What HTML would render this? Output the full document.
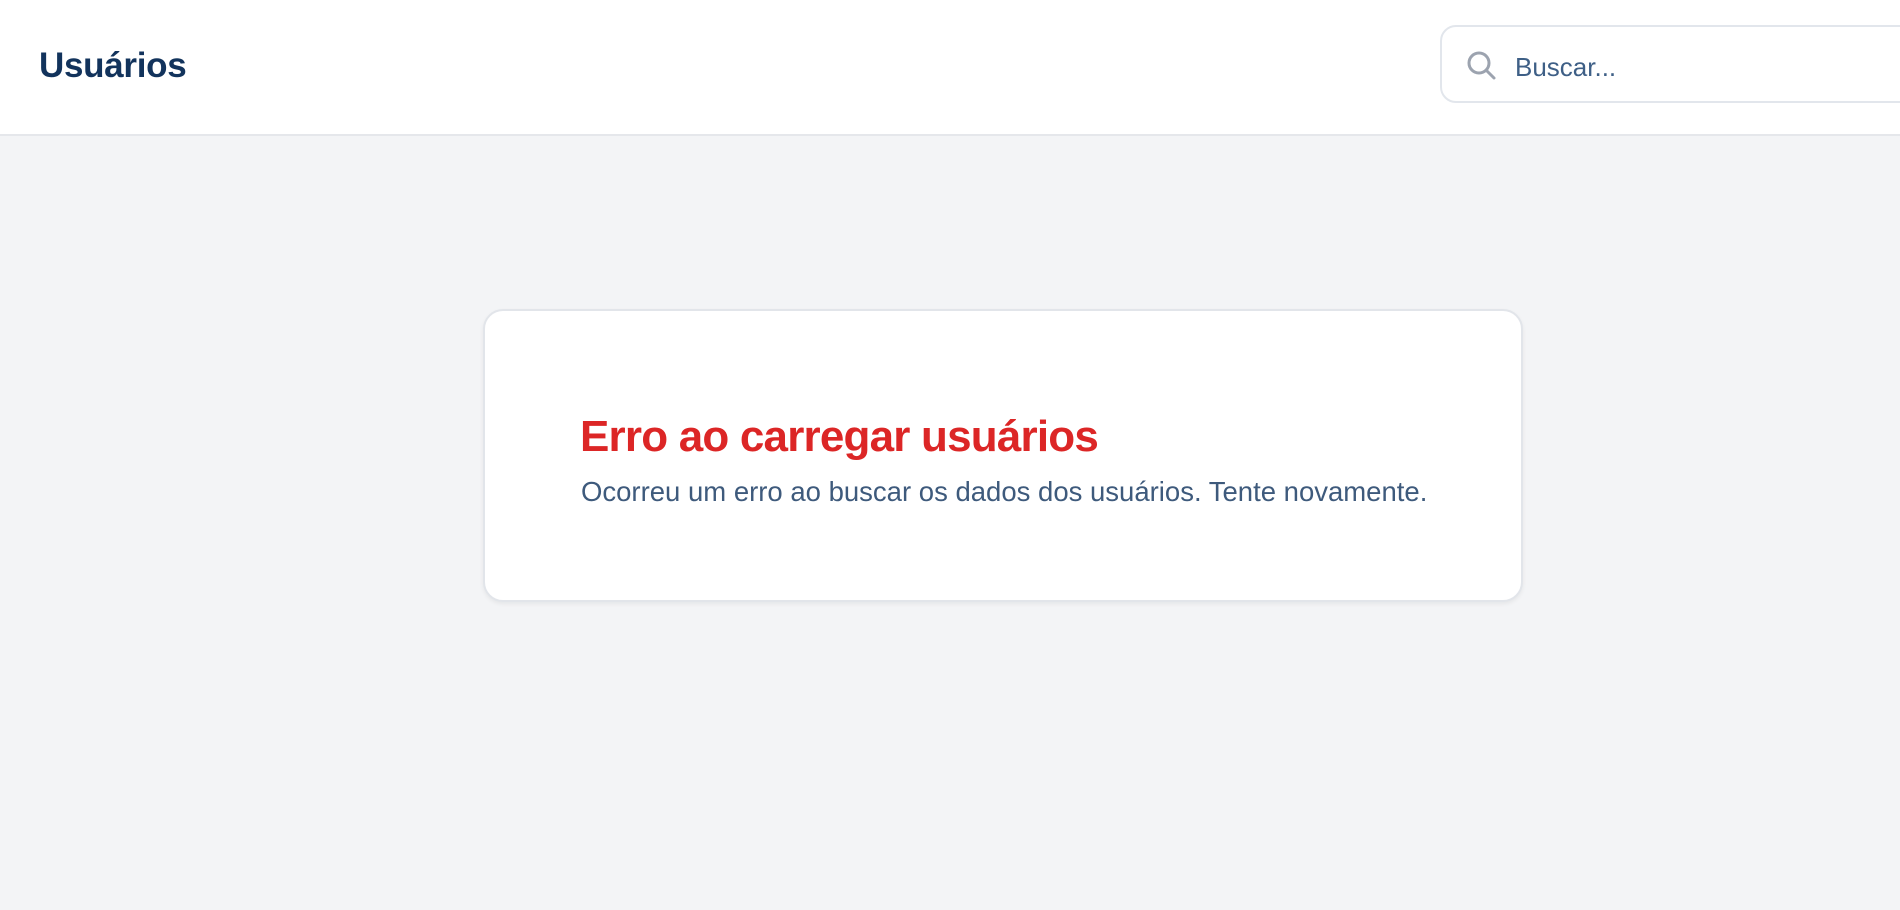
<!DOCTYPE html>
<html><head><meta charset="utf-8"><style>
*{margin:0;padding:0;box-sizing:border-box}
body{width:1900px;height:910px;background:#f3f4f6;font-family:"Liberation Sans",sans-serif;position:relative;overflow:hidden}
.hdr{position:absolute;left:0;top:0;width:1900px;height:136px;background:#fff;border-bottom:2px solid #e5e7eb}
.t{position:absolute;left:39px;top:46px;font-size:35px;font-weight:700;color:#12335c;letter-spacing:-0.3px}
.s{position:absolute;left:1440px;top:25px;width:500px;height:78px;border:2px solid #e2e6ec;border-radius:16px;background:#fff}
.s svg{position:absolute;left:24px;top:23px}
.s span{position:absolute;left:73px;top:25px;font-size:26px;color:#3e5f86}
.card{position:absolute;left:483px;top:309px;width:1040px;height:293px;background:#fff;border:2px solid #e2e5ea;border-radius:20px;box-shadow:0 2px 4px rgba(0,0,0,.06)}
.h{position:absolute;left:95px;top:101px;font-size:44px;font-weight:700;color:#dc2626;letter-spacing:-0.8px}
.p{position:absolute;left:96px;top:165px;font-size:27.5px;color:#3e5a7c;white-space:nowrap}
</style></head><body>
<div class="hdr"><div class="t">Usuários</div>
<div class="s"><svg width="32" height="32" viewBox="0 0 32 32"><circle cx="13" cy="13" r="10" fill="none" stroke="#9ca3af" stroke-width="3"/><path d="M20.5 20.5L28 28" stroke="#9ca3af" stroke-width="3" stroke-linecap="round"/></svg><span>Buscar...</span></div></div>
<div class="card"><div class="h">Erro ao carregar usuários</div><div class="p">Ocorreu um erro ao buscar os dados dos usuários. Tente novamente.</div></div>
</body></html>
